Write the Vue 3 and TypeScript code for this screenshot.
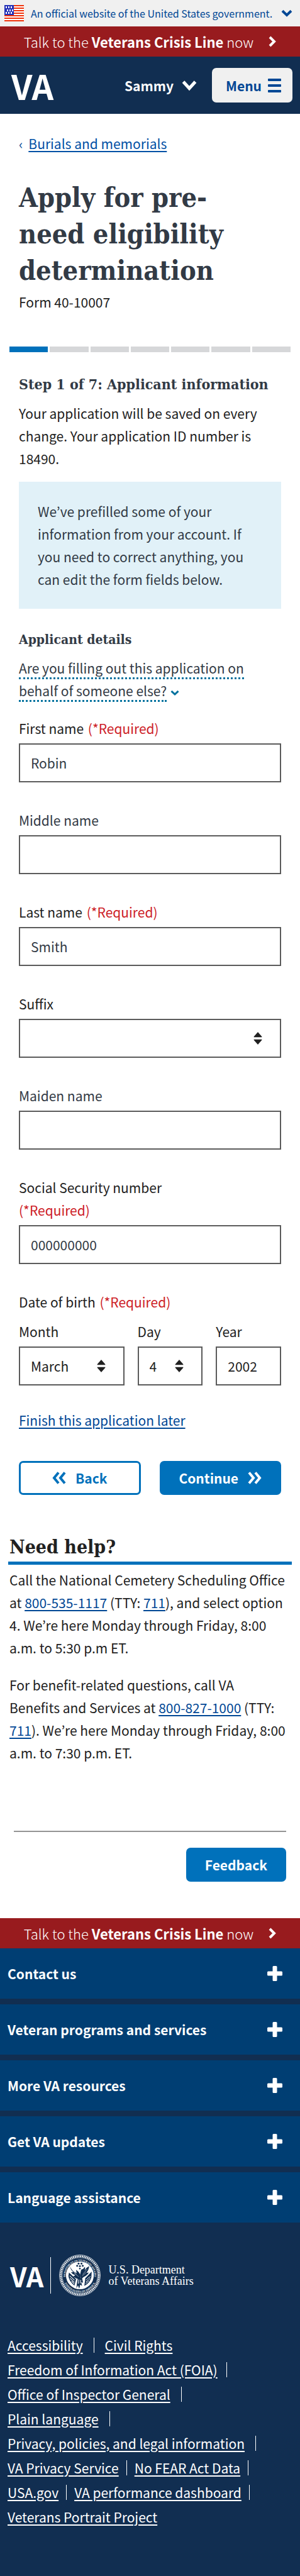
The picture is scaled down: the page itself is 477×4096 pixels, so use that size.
<script setup lang="ts">
import { ref } from 'vue'

interface FooterLink {
  label: string
  gap: 'wide' | 'medium' | 'narrow' | 'none'
}

const firstName = ref('Robin')
const middleName = ref('')
const lastName = ref('Smith')
const suffix = ref('')
const maidenName = ref('')
const ssn = ref('000000000')
const month = ref('March')
const day = ref('4')
const year = ref('2002')

const totalSteps = 7
const currentStep = 1

const suffixes: string[] = ['', 'Jr.', 'Sr.', 'II', 'III', 'IV']
const months: string[] = [
  'January', 'February', 'March', 'April', 'May', 'June',
  'July', 'August', 'September', 'October', 'November', 'December',
]

const sections: string[] = [
  'Contact us',
  'Veteran programs and services',
  'More VA resources',
  'Get VA updates',
  'Language assistance',
]

const linkRows: FooterLink[][] = [
  [{ label: 'Accessibility', gap: 'wide' }, { label: 'Civil Rights', gap: 'none' }],
  [{ label: 'Freedom of Information Act (FOIA)', gap: 'medium' }],
  [{ label: 'Office of Inspector General', gap: 'wide' }],
  [{ label: 'Plain language', gap: 'wide' }],
  [{ label: 'Privacy, policies, and legal information', gap: 'wide' }],
  [{ label: 'VA Privacy Service', gap: 'narrow' }, { label: 'No FEAR Act Data', gap: 'narrow' }],
  [{ label: 'USA.gov', gap: 'narrow' }, { label: 'VA performance dashboard', gap: 'narrow' }],
  [{ label: 'Veterans Portrait Project', gap: 'none' }],
]
</script>

<template>
  <div class="page">
    <button type="button" class="gov-banner">
      <svg class="flag" viewBox="0 0 31 26" aria-hidden="true">
        <rect width="31" height="26" fill="#fff" />
        <g fill="#f0330b">
          <rect y="0" width="31" height="2" />
          <rect y="4" width="31" height="2" />
          <rect y="8" width="31" height="2" />
          <rect y="12" width="31" height="2" />
          <rect y="16" width="31" height="2" />
          <rect y="20" width="31" height="2" />
          <rect y="24" width="31" height="2" />
        </g>
        <rect width="15" height="16" fill="#2431b8" />
        <g fill="#fff">
          <rect x="2" y="2" width="2" height="3" /><rect x="6" y="2" width="2" height="3" /><rect x="10" y="2" width="2" height="3" />
          <rect x="4" y="7" width="2" height="3" /><rect x="8" y="7" width="2" height="3" /><rect x="12" y="7" width="2" height="3" />
          <rect x="2" y="11" width="2" height="3" /><rect x="6" y="11" width="2" height="3" /><rect x="10" y="11" width="2" height="3" />
        </g>
      </svg>
      <span class="gov-text">An official website of the United States government.</span>
      <svg class="gov-chevron" viewBox="0 0 18 12" aria-hidden="true">
        <path d="M2 2.2 L9 9 L16 2.2" fill="none" stroke="currentColor" stroke-width="4" />
      </svg>
    </button>

    <a class="crisis" href="#crisis">
      <span>Talk to the <b>Veterans Crisis Line</b> now</span>
      <svg viewBox="0 0 12 18" aria-hidden="true">
        <path d="M2 2 L9 9 L2 16" fill="none" stroke="currentColor" stroke-width="4" />
      </svg>
    </a>

    <header class="header">
      <a class="logo" href="#home">VA</a>
      <div class="header-actions">
        <button type="button" class="user">
          <span>Sammy</span>
          <svg viewBox="0 0 24 18" aria-hidden="true">
            <path d="M2.5 3 L12 13.5 L21.5 3" fill="none" stroke="currentColor" stroke-width="5" />
          </svg>
        </button>
        <button type="button" class="menu">
          <span>Menu</span>
          <svg viewBox="0 0 21 22" aria-hidden="true">
            <g fill="currentColor">
              <rect width="21" height="4" rx="1" />
              <rect y="9" width="21" height="4" rx="1" />
              <rect y="18" width="21" height="4" rx="1" />
            </g>
          </svg>
        </button>
      </div>
    </header>

    <main>
      <nav class="breadcrumb" aria-label="Breadcrumb">
        <span class="back-mark">‹</span>
        <a href="#burials">Burials and memorials</a>
      </nav>

      <div class="inset">
        <h1>Apply for pre-need eligibility determination</h1>
        <p class="form-number">Form 40-10007</p>
      </div>

      <div class="progress" role="progressbar" aria-valuemin="1" :aria-valuemax="totalSteps" :aria-valuenow="currentStep" aria-label="Form progress">
        <span v-for="n in totalSteps" :key="n" :class="{ done: n <= currentStep }"></span>
      </div>

      <form class="inset" @submit.prevent>
        <h2>Step 1 of 7: Applicant information</h2>
        <p class="saved">Your application will be saved on every change. Your application ID number is 18490.</p>

        <div class="notice">
          <p>We’ve prefilled some of your information from your account. If you need to correct anything, you can edit the form fields below.</p>
        </div>

        <h3>Applicant details</h3>
        <button type="button" class="expander">
          <span class="dotted">Are you filling out this application on behalf of someone else?</span>
          <svg viewBox="0 0 14 10" aria-hidden="true">
            <path d="M1.5 1.8 L7 7 L12.5 1.8" fill="none" stroke="currentColor" stroke-width="3" />
          </svg>
        </button>

        <div class="field">
          <label class="dark" for="first">First name <span class="required">(*Required)</span></label>
          <input id="first" v-model="firstName" type="text" />
        </div>
        <div class="field">
          <label for="middle">Middle name</label>
          <input id="middle" v-model="middleName" type="text" />
        </div>
        <div class="field">
          <label class="dark" for="last">Last name <span class="required">(*Required)</span></label>
          <input id="last" v-model="lastName" type="text" />
        </div>
        <div class="field">
          <label class="dark" for="suffix">Suffix</label>
          <div class="select">
            <select id="suffix" v-model="suffix">
              <option v-for="s in suffixes" :key="s" :value="s">{{ s }}</option>
            </select>
            <svg viewBox="0 0 14 22" aria-hidden="true"><path d="M7 0 L14 8 V9 H0 V8 Z M0 13 H14 V14 L7 22 L0 14 Z" fill="#212121" /></svg>
          </div>
        </div>
        <div class="field">
          <label for="maiden">Maiden name</label>
          <input id="maiden" v-model="maidenName" type="text" />
        </div>
        <div class="field">
          <label class="dark" for="ssn">Social Security number <span class="required">(*Required)</span></label>
          <input id="ssn" v-model="ssn" type="text" />
        </div>

        <fieldset>
          <legend>Date of birth <span class="required">(*Required)</span></legend>
          <div class="date-row">
            <div>
              <label class="dark" for="month">Month</label>
              <div class="select">
                <select id="month" v-model="month">
                  <option v-for="m in months" :key="m" :value="m">{{ m }}</option>
                </select>
                <svg viewBox="0 0 14 22" aria-hidden="true"><path d="M7 0 L14 8 V9 H0 V8 Z M0 13 H14 V14 L7 22 L0 14 Z" fill="#212121" /></svg>
              </div>
            </div>
            <div>
              <label class="dark" for="day">Day</label>
              <div class="select">
                <select id="day" v-model="day">
                  <option v-for="d in 31" :key="d" :value="String(d)">{{ d }}</option>
                </select>
                <svg viewBox="0 0 14 22" aria-hidden="true"><path d="M7 0 L14 8 V9 H0 V8 Z M0 13 H14 V14 L7 22 L0 14 Z" fill="#212121" /></svg>
              </div>
            </div>
            <div>
              <label class="dark" for="year">Year</label>
              <input id="year" v-model="year" class="dark" type="text" />
            </div>
          </div>
        </fieldset>

        <a class="later" href="#later">Finish this application later</a>

        <div class="buttons">
          <button type="button" class="btn outline">
            <svg viewBox="0 0 22 20" aria-hidden="true">
              <path d="M10 1.5 L3 10 L10 18.5 M20 1.5 L13 10 L20 18.5" fill="none" stroke="currentColor" stroke-width="4" />
            </svg>
            <span>Back</span>
          </button>
          <button type="submit" class="btn solid">
            <span>Continue</span>
            <svg viewBox="0 0 22 20" aria-hidden="true">
              <path d="M2 1.5 L9 10 L2 18.5 M12 1.5 L19 10 L12 18.5" fill="none" stroke="currentColor" stroke-width="4" />
            </svg>
          </button>
        </div>
      </form>

      <section class="help">
        <h2>Need help?</h2>
        <p>Call the National Cemetery Scheduling Office at <a href="tel:8005351117">800-535-1117</a> (TTY: <a href="tel:711">711</a>), and select option 4. We’re here Monday through Friday, 8:00 a.m. to 5:30 p.m ET.</p>
        <p>For benefit-related questions, call VA Benefits and Services at <a href="tel:8008271000">800-827-1000</a> (TTY: <a href="tel:711">711</a>). We’re here Monday through Friday, 8:00 a.m. to 7:30 p.m. ET.</p>
      </section>

      <div class="feedback-row">
        <button type="button" class="feedback">Feedback</button>
      </div>
    </main>

    <footer>
      <a class="crisis" href="#crisis">
        <span>Talk to the <b>Veterans Crisis Line</b> now</span>
        <svg viewBox="0 0 12 18" aria-hidden="true">
          <path d="M2 2 L9 9 L2 16" fill="none" stroke="currentColor" stroke-width="4" />
        </svg>
      </a>

      <div class="sections">
        <button v-for="s in sections" :key="s" type="button">
          <span>{{ s }}</span>
          <svg viewBox="0 0 24 24" aria-hidden="true">
            <g fill="currentColor">
              <rect x="8.5" width="7" height="24" rx="1.5" />
              <rect y="8.5" width="24" height="7" rx="1.5" />
            </g>
          </svg>
        </button>
      </div>

      <div class="brand">
        <span class="brand-va">VA</span>
        <span class="brand-line"></span>
        <svg class="seal" viewBox="-130 -130 260 260" role="img" aria-label="Department seal">
          <defs>
            <path id="seal-top" d="M-90 16 A91 91 0 1 1 90 16" />
            <path id="seal-bottom" d="M-100 36 A106 106 0 0 0 100 36" />
          </defs>
          <circle r="128" fill="none" stroke="#fff" stroke-width="3" />
          <circle r="119" fill="none" stroke="#fff" stroke-width="11" stroke-dasharray="7 4" />
          <circle r="111" fill="none" stroke="#fff" stroke-width="2" />
          <circle r="87" fill="#fff" />
          <text class="seal-text"><textPath href="#seal-top" startOffset="50%" text-anchor="middle">DEPARTMENT OF VETERANS AFFAIRS</textPath></text>
          <text class="seal-text"><textPath href="#seal-bottom" startOffset="50%" text-anchor="middle">UNITED STATES OF AMERICA</textPath></text>
          <g fill="#112e51">
            <path d="M-62 -56 Q-48 -24 -20 -14 L-24 -34 Q-6 -24 2 -4 L4 20 L-16 22 L-44 8 Q-34 4 -30 -2 Q-48 -8 -56 -20 Q-46 -20 -42 -22 Q-58 -34 -62 -56 Z" />
            <path d="M58 -58 Q44 -52 30 -32 Q34 -44 32 -54 Q14 -36 10 -12 L2 4 L8 24 L24 10 Q46 0 56 -18 Q46 -16 42 -18 Q56 -34 58 -58 Z" />
            <path d="M8 -34 Q18 -44 24 -36 L34 -30 L22 -26 Q20 -6 12 8 L0 0 Z" />
            <path d="M-68 -18 L-24 24 L-34 64 Q-66 40 -72 4 Z" />
            <path d="M74 -24 L34 18 L28 66 Q62 50 72 12 Z" />
            <path d="M-12 16 L14 18 L20 46 L8 42 L14 66 L2 58 L-4 84 L-12 62 L-22 82 L-18 46 Z" />
          </g>
          <g stroke="#fff" stroke-width="4" fill="none">
            <path d="M-64 2 L-34 30 M-62 18 L-34 44 M-52 36 L-36 54 M-6 26 L-10 52 M6 28 L2 50" />
            <path d="M66 6 L38 30 M64 20 L38 42 M54 36 L36 54" stroke-dasharray="6 3" />
            <path d="M-50 -36 L-22 -6 M-36 -14 L-8 8 M46 -40 L18 -6 M40 -18 L14 4" stroke-width="2" />
          </g>
          <g fill="#112e51">
            <circle cx="-8" cy="-74" r="6" /><circle cx="10" cy="-74" r="6" /><circle cx="-17" cy="-60" r="6" />
            <circle cx="18" cy="-60" r="6" /><circle cx="0" cy="-58" r="6" /><circle cx="0" cy="-42" r="5" />
          </g>
        </svg>
        <span class="brand-name">U.S. Department<br />of Veterans Affairs</span>
      </div>

      <ul class="legal">
        <li v-for="(row, i) in linkRows" :key="i">
          <template v-for="link in row" :key="link.label">
            <a href="#legal">{{ link.label }}</a>
            <span v-if="link.gap !== 'none'" class="bar" :class="link.gap"></span>
          </template>
        </li>
      </ul>
    </footer>
  </div>
</template>

<style>
body {
  margin: 0;
  background: #fff;
}
</style>

<style scoped>
.page {
  --sans: "Noto Sans CJK KR", "Noto Sans", sans-serif;
  --slab: "DejaVu Serif Condensed", "DejaVu Serif", serif;
  --body: 21px;
  --line: 36px;
  --navy: #112e51;
  --primary: #0071bb;
  --link: #004795;
  --ink: #212121;
  --slate: #323a45;
  display: flex;
  flex-direction: column;
  min-width: 320px;
  min-height: 100vh;
  font: 400 var(--body) / var(--line) var(--sans);
  color: var(--ink);
}
.page *,
.page *::before {
  box-sizing: border-box;
}
button,
input,
select {
  font: inherit;
  color: inherit;
  margin: 0;
  border: 0;
  border-radius: 0;
  background: none;
  padding: 0;
}
button,
select {
  cursor: pointer;
}
svg {
  display: block;
  flex: none;
}
h1,
h2,
h3,
p {
  margin: 0;
}
h1,
h2,
h3 {
  font-family: var(--slab);
  font-weight: 700;
  color: var(--slate);
}
a {
  color: var(--link);
  text-decoration: underline;
  text-decoration-thickness: 2px;
  text-underline-offset: 3px;
}

.gov-banner {
  display: flex;
  align-items: center;
  width: 100%;
  height: 42px;
  padding: 0 12px 0 7px;
  background: #f0f0f0;
  color: var(--link);
  font-size: 16px;
  line-height: 24px;
  text-align: left;
}
.flag {
  width: 31px;
  height: 26px;
}
.gov-text {
  margin-left: 11px;
  white-space: nowrap;
}
.gov-chevron {
  width: 18px;
  height: 12px;
  margin-left: auto;
}

.crisis {
  display: flex;
  align-items: center;
  justify-content: center;
  gap: 24px;
  height: 48px;
  background: #981b1e;
  color: #fff;
  font-size: 22px;
  font-weight: 300;
  text-decoration: none;
}
.crisis b {
  font-weight: 700;
}
.crisis svg {
  width: 12px;
  height: 22px;
}

.header {
  display: flex;
  align-items: center;
  justify-content: space-between;
  height: 91px;
  padding: 0 12px 0 18px;
  background: var(--navy);
  color: #fff;
}
.logo {
  color: #fff;
  text-decoration: none;
  font-weight: 700;
  font-size: 54px;
  line-height: 54px;
}
.header-actions {
  display: flex;
  align-items: center;
  gap: 24px;
  font-weight: 700;
}
.user {
  display: flex;
  align-items: center;
  gap: 13px;
}
.user svg {
  width: 24px;
  height: 18px;
}
.menu {
  display: flex;
  align-items: center;
  justify-content: center;
  gap: 10px;
  height: 55px;
  padding: 0 18px 0 22px;
  border-radius: 7px;
  background: #f0f0f0;
  color: var(--link);
}
.menu svg {
  width: 21px;
  height: 22px;
}

.breadcrumb {
  display: flex;
  gap: 9px;
  padding: 29px 30px 0;
}
.breadcrumb .back-mark {
  color: var(--link);
}
.breadcrumb a {
  color: #0050a5;
}
.inset {
  padding: 0 30px;
}
h1 {
  margin-top: 39px;
  font-size: 43px;
  line-height: 58px;
  max-width: 380px;
}
.form-number {
  margin-top: 3px;
}
.progress {
  display: flex;
  gap: 3px;
  margin: 53px 15px 0;
}
.progress span {
  flex: 1;
  height: 9px;
  background: #d6d7d9;
}
.progress .done {
  background: var(--primary);
}
form h2 {
  margin-top: 33px;
  font-size: 23px;
  line-height: 36px;
}
.saved {
  margin-top: 10px;
}
.notice {
  margin-top: 19px;
  padding: 29px 30px;
  background: #e1f1f8;
  color: var(--slate);
}
h3 {
  margin-top: 31px;
  font-size: 21px;
  line-height: 36px;
}
.expander {
  display: block;
  margin-top: 9px;
  color: var(--slate);
  text-align: left;
}
.dotted {
  border-bottom: 3px dotted #00719e;
}
.expander svg {
  display: inline-block;
  width: 14px;
  height: 10px;
  margin-left: 6px;
  color: #00719e;
}
.field {
  margin-top: 42px;
}
.expander + .field {
  margin-top: 24px;
}
label {
  display: block;
  max-width: 320px;
  margin-bottom: 6px;
  color: var(--slate);
}
.dark {
  color: var(--ink);
}
.required {
  display: inline-block;
  margin-left: 2px;
  color: #cd2026;
}
label[for="ssn"] .required {
  margin-left: 0;
}
input,
select {
  display: block;
  width: 100%;
  height: 62px;
  padding: 0 17px;
  border: 2px solid #5b5b5b;
  background: #fff;
  color: var(--slate);
  appearance: none;
}
input.dark,
select {
  color: var(--ink);
}
.select {
  position: relative;
}
.select svg {
  position: absolute;
  right: 30px;
  top: 21px;
  width: 14px;
  height: 20px;
  pointer-events: none;
}
fieldset {
  margin: 42px 0 0;
  padding: 0;
  border: 0;
  min-width: 0;
}
legend {
  padding: 0;
}
.date-row {
  display: grid;
  grid-template-columns: 168fr 104fr 104fr;
  gap: 21px;
  margin-top: 11px;
}
.later {
  display: inline-block;
  margin-top: 37px;
}
.buttons {
  display: grid;
  grid-template-columns: 1fr 1fr;
  gap: 30px;
  margin-top: 47px;
}
.btn {
  display: flex;
  align-items: center;
  justify-content: center;
  gap: 15px;
  height: 54px;
  border-radius: 7px;
  font-weight: 700;
}
.btn svg {
  width: 22px;
  height: 20px;
}
.outline {
  border: 3px solid var(--primary);
  background: #fff;
  color: var(--primary);
}
.solid {
  background: var(--primary);
  color: #fff;
}

.help {
  margin: 0 13px;
}
.help h2 {
  margin-top: 60px;
  padding: 0 2px;
  border-bottom: 5px solid var(--primary);
  font-size: 30px;
  line-height: 46px;
  color: var(--ink);
}
.help p {
  padding: 0 2px;
  margin-top: 6px;
}
.help p + p {
  margin-top: 23px;
  padding-right: 10px;
}
.feedback-row {
  display: flex;
  justify-content: flex-end;
  margin: 106px 22px 0;
  padding: 25px 0 58px;
  border-top: 2px solid #949494;
}
.feedback {
  height: 54px;
  padding: 0 30px;
  border-radius: 7px;
  background: var(--primary);
  color: #fff;
  font-weight: 700;
}

footer {
  flex: 1;
  background: var(--navy);
  color: #fff;
  padding-bottom: 60px;
}
.sections {
  display: flex;
  flex-direction: column;
  gap: 9px;
}
.sections button {
  display: flex;
  align-items: center;
  justify-content: space-between;
  height: 80px;
  padding: 0 28px 0 12px;
  background: #003e73;
  font-weight: 700;
  text-align: left;
}
.sections svg {
  width: 24px;
  height: 24px;
}
.brand {
  display: flex;
  align-items: center;
  margin-top: 51px;
  padding-left: 16px;
}
.brand-va {
  font-weight: 700;
  font-size: 43px;
  line-height: 44px;
}
.brand-line {
  width: 1px;
  height: 58px;
  margin-left: 11px;
  background: #fff;
}
.seal {
  width: 66px;
  height: 66px;
  margin-left: 13px;
}
.seal-text {
  font: 700 16px "Liberation Serif", serif;
  fill: #fff;
}
.brand-name {
  margin-left: 12px;
  font: 400 18px / 18px "Liberation Serif", serif;
}
.legal {
  list-style: none;
  margin: 58px 0 0;
  padding: 0 12px;
}
.legal li {
  display: flex;
  align-items: center;
  height: 39px;
}
.legal a {
  color: #fff;
}
.bar {
  width: 1px;
  height: 24px;
  background: #fff;
}
.wide {
  margin: 0 17px;
}
.medium {
  margin: 0 14px;
}
.narrow {
  margin: 0 12px;
}
</style>
